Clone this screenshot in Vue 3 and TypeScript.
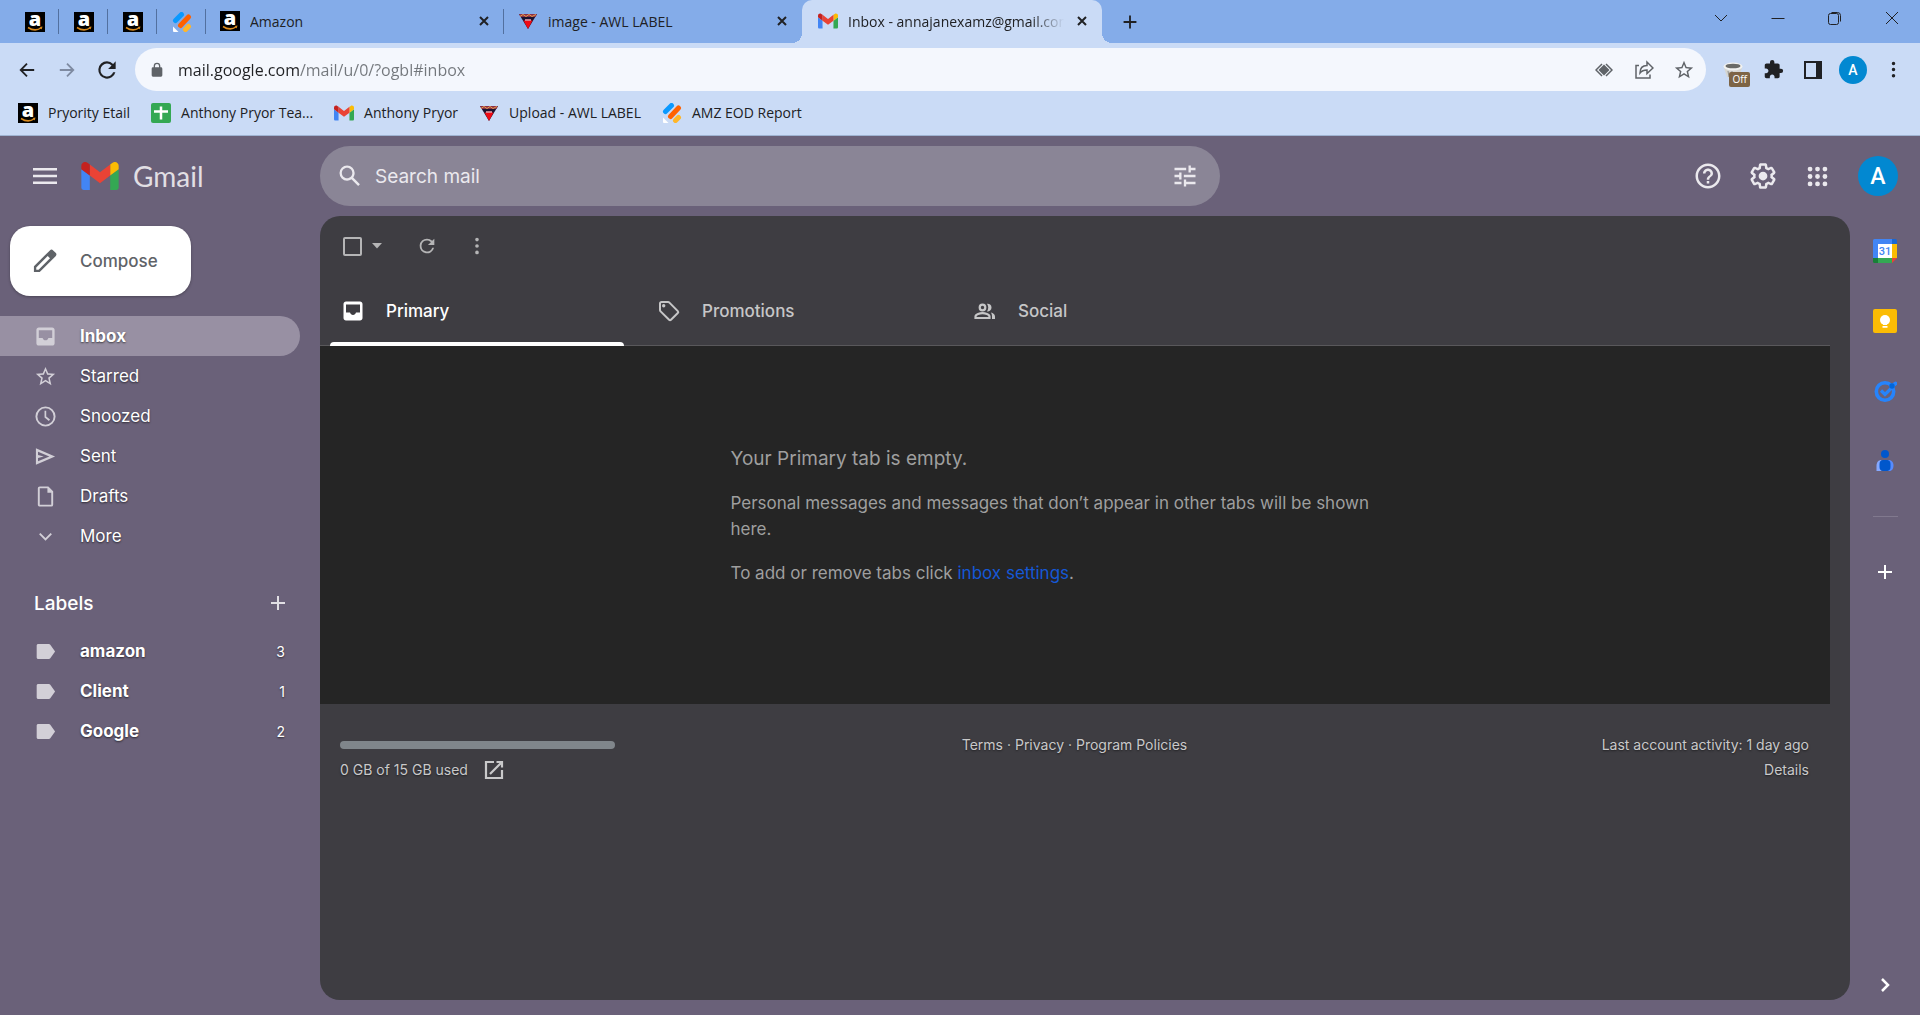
<script setup lang="ts">
import { ref } from 'vue'

interface NavItem { icon: string; name: string }
interface LabelItem { name: string; count: number }
interface Bookmark { icon: string; title: string }

const pinned: string[] = ['amazon', 'amazon', 'amazon', 'jot']
const openTabs: Bookmark[] = [
  { icon: 'amazon', title: 'Amazon' },
  { icon: 'awl', title: 'image - AWL LABEL' },
]
const bookmarks: Bookmark[] = [
  { icon: 'amazon', title: 'Pryority Etail' },
  { icon: 'sheet', title: 'Anthony Pryor Tea...' },
  { icon: 'gmail', title: 'Anthony Pryor' },
  { icon: 'awl', title: 'Upload - AWL LABEL' },
  { icon: 'jot', title: 'AMZ EOD Report' },
]
const nav: NavItem[] = [
  { icon: 'inbox', name: 'Inbox' },
  { icon: 'star', name: 'Starred' },
  { icon: 'clock', name: 'Snoozed' },
  { icon: 'send', name: 'Sent' },
  { icon: 'file', name: 'Drafts' },
  { icon: 'down', name: 'More' },
]
const labels: LabelItem[] = [
  { name: 'amazon', count: 3 },
  { name: 'Client', count: 1 },
  { name: 'Google', count: 2 },
]
const categories: NavItem[] = [
  { icon: 'inbox', name: 'Primary' },
  { icon: 'tag', name: 'Promotions' },
  { icon: 'people', name: 'Social' },
]
const apps: NavItem[] = [
  { icon: 'calendar', name: 'Calendar' },
  { icon: 'keep', name: 'Keep' },
  { icon: 'tasks', name: 'Tasks' },
  { icon: 'contacts', name: 'Contacts' },
]
const activeNav = ref('Inbox')
const activeCategory = ref('Primary')
const address = ref('mail.google.com/mail/u/0/?ogbl#inbox')
const query = ref('')
const allSelected = ref(false)
</script>

<template>
  <div class="window">
    <svg class="sprite" aria-hidden="true">
      <symbol id="amazon" viewBox="0 0 20 20">
        <rect width="20" height="20" fill="#000" />
        <text x="10" y="14" text-anchor="middle" font-family="Open Sans, sans-serif" font-weight="800" font-size="20" fill="#fff">a</text>
        <path d="M3 15.500q7 4.500 13 .5" fill="none" stroke="#d98a1e" stroke-width="1.500" />
        <path d="M14.500 15l3-.4-.8 2.800z" fill="#d98a1e" />
      </symbol>
      <symbol id="jot" viewBox="0 0 20 20">
        <g fill="none" stroke-width="5" stroke-linecap="round">
          <path d="M3.500 8.500l6-6" stroke="#0a99ff" />
          <path d="M8.500 13.500l8-8.500" stroke="#ff6100" />
          <path d="M13.500 17.500l3-3" stroke="#ffb629" />
        </g>
        <path d="M1 14.500l5.500 5.500H2a1 1 0 0 1-1-1z" fill="#fff" />
      </symbol>
      <symbol id="awl" viewBox="0 0 20 20">
        <path d="M1 3h18l-9 15z" fill="#1c1430" />
        <path d="M5.500 9.500h9L10 18z" fill="#f00a14" />
        <path d="M1 3h18l-1.500 3h-15z" fill="#8d3048" />
        <path d="M2 5.500l3-2 3 2 3-2 3 2 4-2" stroke="#e7a04a" fill="none" />
        <path d="M7 9h6" stroke="#f6a3ab" stroke-width="1.500" />
      </symbol>
      <symbol id="sheet" viewBox="0 0 20 20">
        <rect width="20" height="20" rx="2" fill="#34a853" />
        <path d="M10 3.500v13M3 8.500h14" stroke="#fff" stroke-width="2.500" />
      </symbol>
      <symbol id="gmail" viewBox="52 42 88 66">
        <path fill="#4285f4" d="M58 108h14V74L52 59v43c0 3.320 2.690 6 6 6" />
        <path fill="#34a853" d="M120 108h14c3.320 0 6-2.690 6-6V59l-20 15" />
        <path fill="#fbbc04" d="M120 48v26l20-15v-8c0-7.420-8.470-11.650-14.400-7.200" />
        <path fill="#ea4335" d="M72 74V48l24 18 24-18v26L96 92" />
        <path fill="#c5221f" d="M52 51v8l20 15V48l-5.600-4.200c-5.940-4.450-14.400-.22-14.400 7.200" />
      </symbol>
      <symbol id="close" viewBox="0 0 16 16"><path d="M4 4l8 8M12 4l-8 8" stroke="currentColor" stroke-width="2" /></symbol>
      <symbol id="plus" viewBox="0 0 24 24"><path d="M12 5v14M5 12h14" stroke="currentColor" stroke-width="2" /></symbol>
      <symbol id="back" viewBox="0 0 20 20"><path d="M18 10H3M10 3l-7 7 7 7" fill="none" stroke="currentColor" stroke-width="2" /></symbol>
      <symbol id="forward" viewBox="0 0 20 20"><path d="M2 10h15M10 3l7 7-7 7" fill="none" stroke="currentColor" stroke-width="2" /></symbol>
      <symbol id="lock" viewBox="0 0 24 24"><path fill="currentColor" d="M18 8h-1V6A5 5 0 0 0 7 6v2H6a2 2 0 0 0-2 2v10a2 2 0 0 0 2 2h12a2 2 0 0 0 2-2V10a2 2 0 0 0-2-2zM9 6a3 3 0 0 1 6 0v2H9z" /></symbol>
      <symbol id="lens" viewBox="0 0 18 14">
        <path d="M7 1L1 7l6 6M11 1l6 6-6 6" fill="none" stroke="currentColor" stroke-width="1.500" />
        <path d="M9 1.500L14.500 7 9 12.500 3.500 7z" fill="currentColor" />
      </symbol>
      <symbol id="share" viewBox="0 0 20 20"><path d="M5 5.500H2V18h14v-3.500M6 13c0-5 3-7.500 7-7.500V2l6 6-6 5.500V10c-3 0-5 .5-7 3z" fill="none" stroke="currentColor" stroke-width="1.500" /></symbol>
      <symbol id="puzzle" viewBox="0 0 24 24"><path fill="currentColor" d="M20.500 11H19V7c0-1.100-.9-2-2-2h-4V3.500a2.500 2.500 0 0 0-5 0V5H4c-1.100 0-2 .9-2 2v3.800h1.500c1.490 0 2.700 1.210 2.700 2.700s-1.210 2.700-2.700 2.700H2V20c0 1.100.9 2 2 2h3.800v-1.500c0-1.490 1.210-2.700 2.700-2.700s2.700 1.210 2.700 2.700V22H17c1.100 0 2-.9 2-2v-4h1.500a2.500 2.500 0 0 0 0-5z" /></symbol>
      <symbol id="panel" viewBox="0 0 18 18"><path fill="currentColor" fill-rule="evenodd" d="M0 0h18v18H0zM2 2v14h10V2z" /></symbol>
      <symbol id="bucket" viewBox="0 0 20 16">
        <path d="M1 6h18l-3 9c-3 1.500-9 1.500-12 0z" fill="#d6d6d2" />
        <path d="M5 9l1 6M9 9v7" stroke="#8f8f8c" />
        <ellipse cx="10" cy="4.500" rx="9.500" ry="4" fill="#f2f2f0" />
        <ellipse cx="10" cy="4" rx="7.500" ry="2.300" fill="#6b6b68" />
      </symbol>
      <symbol id="chev" viewBox="0 0 14 14"><path d="M1 4l6 6 6-6" fill="none" stroke="currentColor" /></symbol>
      <symbol id="min" viewBox="0 0 14 14"><path d="M.5 7.500h13" stroke="currentColor" /></symbol>
      <symbol id="restore" viewBox="0 0 14 14"><path d="M3.500 1.500h6a3 3 0 0 1 3 3v6" fill="none" stroke="currentColor" /><rect x=".5" y="2.500" width="10" height="11" rx="2" fill="none" stroke="currentColor" /></symbol>
      <symbol id="exit" viewBox="0 0 14 14"><path d="M1 1l12 12M13 1L1 13" stroke="currentColor" /></symbol>
      <symbol id="menu" viewBox="0 0 24 24"><path fill="currentColor" d="M0 20h24v-2.500H0zm0-6.800h24v-2.400H0zM0 4v2.500h24V4z" /></symbol>
      <symbol id="search" viewBox="0 0 24 24"><path fill="currentColor" d="M20.490 19l-5.730-5.730C15.530 12.200 16 10.910 16 9.500A6.500 6.500 0 1 0 9.500 16c1.410 0 2.700-.47 3.770-1.240L19 20.490 20.490 19zM5 9.500C5 7.010 7.010 5 9.500 5S14 7.010 14 9.500 11.990 14 9.500 14 5 11.990 5 9.500z" /></symbol>
      <symbol id="tune" viewBox="0 0 24 24"><path fill="currentColor" d="M3 17v2h6v-2H3zM3 5v2h10V5H3zm10 16v-2h8v-2h-8v-2h-2v6h2zM7 9v2H3v2h4v2h2V9H7zm14 4v-2H11v2h10zm-6-4h2V7h4V5h-4V3h-2v6z" /></symbol>
      <symbol id="help" viewBox="0 0 24 24"><path fill="currentColor" d="M11 18h2v-2h-2v2zm1-16C6.480 2 2 6.480 2 12s4.480 10 10 10 10-4.480 10-10S17.520 2 12 2zm0 18c-4.410 0-8-3.590-8-8s3.590-8 8-8 8 3.590 8 8-3.590 8-8 8zm0-14c-2.210 0-4 1.790-4 4h2c0-1.100.9-2 2-2s2 .9 2 2c0 2-3 1.750-3 5h2c0-2.250 3-2.500 3-5 0-2.210-1.790-4-4-4z" /></symbol>
      <symbol id="gear" viewBox="0 0 24 24">
        <path fill="currentColor" d="M13.850 22.250h-3.700c-.74 0-1.360-.54-1.450-1.270l-.27-1.890c-.27-.14-.53-.29-.79-.46l-1.800.72c-.7.26-1.470-.03-1.810-.65L2.200 15.530c-.35-.66-.2-1.440.36-1.880l1.530-1.190c-.01-.15-.02-.3-.02-.46 0-.15.01-.31.02-.46l-1.520-1.190c-.59-.45-.74-1.260-.37-1.880l1.850-3.190c.34-.62 1.110-.9 1.790-.63l1.810.73c.26-.17.52-.32.78-.46l.27-1.910c.09-.7.71-1.250 1.440-1.250h3.700c.74 0 1.360.54 1.450 1.270l.27 1.890c.27.14.53.29.79.46l1.800-.72c.71-.26 1.480.03 1.820.65l1.840 3.180c.36.66.2 1.440-.36 1.880l-1.520 1.190c.01.15.02.3.02.46s-.01.31-.02.46l1.520 1.190c.56.45.72 1.230.37 1.860l-1.860 3.220c-.34.62-1.110.9-1.800.63l-1.800-.72c-.26.17-.52.32-.78.46l-.27 1.910c-.1.68-.72 1.220-1.460 1.220zm-3.230-2h2.760l.37-2.550.53-.22c.44-.18.88-.44 1.340-.78l.45-.34 2.380.96 1.380-2.400-2.030-1.580.07-.56c.03-.26.06-.51.06-.78s-.03-.53-.06-.78l-.07-.56 2.030-1.580-1.390-2.400-2.390.96-.45-.35c-.42-.32-.87-.58-1.330-.77l-.52-.22-.37-2.550h-2.760l-.37 2.550-.53.21c-.44.19-.88.44-1.340.79l-.45.33-2.380-.95-1.390 2.390 2.030 1.580-.07.56a7 7 0 0 0-.06.79c0 .26.02.53.06.78l.07.56-2.030 1.580 1.380 2.400 2.390-.96.45.35c.43.33.86.58 1.330.77l.53.22.38 2.550z" />
        <circle cx="12" cy="12" r="3.500" fill="currentColor" />
      </symbol>
      <symbol id="grid" viewBox="0 0 24 24"><path fill="none" stroke="currentColor" stroke-width="5.500" stroke-linecap="round" d="M3.500 3.500h0M12 3.500h0M20.500 3.500h0M3.500 12h0M12 12h0M20.500 12h0M3.500 20.500h0M12 20.500h0M20.500 20.500h0" /></symbol>
      <symbol id="pencil" viewBox="0 0 24 24"><path fill="currentColor" fill-rule="evenodd" d="M21.100 5l-2.100-2.100a2 2 0 0 0-2.830 0L2.500 16.500v5h5L21.100 7.830a2 2 0 0 0 0-2.830zM6.500 19.500h-2v-2L14.300 7.700l2 2z" /></symbol>
      <symbol id="inbox" viewBox="0 0 24 24"><path fill="currentColor" d="M19 2.500H5c-1.400 0-2.500 1.100-2.500 2.500v14c0 1.400 1.100 2.500 2.500 2.500h14c1.400 0 2.500-1.100 2.500-2.500V5c0-1.400-1.100-2.500-2.500-2.500zm0 11h-4c-.5 1.500-1.500 2.500-3 2.500s-2.500-1-3-2.500H5V5.500h14v8z" /></symbol>
      <symbol id="star" viewBox="0 0 24 24"><path fill="currentColor" d="M22 9.240l-7.190-.62L12 2 9.190 8.630 2 9.240l5.460 4.730L5.820 21 12 17.270 18.180 21l-1.630-7.030L22 9.240zM12 15.400l-3.760 2.270 1-4.280-3.320-2.880 4.380-.38L12 6.100l1.710 4.040 4.380.38-3.320 2.880 1 4.280L12 15.400z" /></symbol>
      <symbol id="clock" viewBox="0 0 24 24"><path fill="currentColor" d="M12 1.500a10.500 10.500 0 1 0 0 21 10.500 10.500 0 0 0 0-21zm0 19a8.500 8.500 0 1 1 0-17 8.500 8.500 0 0 1 0 17zM12.750 6H11v7l4.500 3.600 1.200-1.400-3.950-3.200z" /></symbol>
      <symbol id="send" viewBox="0 0 24 24"><path fill="currentColor" fill-rule="evenodd" d="M2 3.500v17l20-8.500zm2.200 3.500L16 12 4.200 17v-3.500l6-1.500-6-1.500z" /></symbol>
      <symbol id="file" viewBox="0 0 24 24"><path fill="currentColor" fill-rule="evenodd" d="M15 1.500H6a2 2 0 0 0-2 2v17c0 1.100.9 2 2 2h12a2 2 0 0 0 2-2V6.500zm3 19H6v-17h8v4.500h4z" /></symbol>
      <symbol id="down" viewBox="0 0 24 24"><path d="M6 9l6 6 6-6" fill="none" stroke="currentColor" stroke-width="2" /></symbol>
      <symbol id="right" viewBox="0 0 24 24"><path d="M9 6l6 6-6 6" fill="none" stroke="currentColor" stroke-width="2.500" /></symbol>
      <symbol id="label" viewBox="0 0 24 24"><path fill="currentColor" d="M17 5c-.3-.5-.9-.8-1.500-.8H4.500c-1 0-1.700.7-1.700 1.600v12.400c0 .9.700 1.600 1.700 1.600h11c.6 0 1.200-.3 1.500-.8l5-7z" /></symbol>
      <symbol id="caret" viewBox="0 0 10 6"><path fill="currentColor" d="M0 0h10L5 5.500z" /></symbol>
      <symbol id="refresh" viewBox="0 0 24 24"><path fill="currentColor" d="M17.650 6.350A7.960 7.960 0 0 0 12 4a8 8 0 1 0 7.730 10h-2.080A6 6 0 1 1 12 6c1.660 0 3.140.69 4.220 1.780L13 11h7V4l-2.350 2.350z" /></symbol>
      <symbol id="dots" viewBox="0 0 24 24"><path fill="none" stroke="currentColor" stroke-width="4" stroke-linecap="round" d="M12 5h0M12 12h0M12 19h0" /></symbol>
      <symbol id="tag" viewBox="0 0 24 24">
        <path d="M3 4.500V11c0 .5.200 1 .6 1.400l8.500 8.400c.6.600 1.300.6 1.900 0l6.800-6.800c.6-.6.6-1.300 0-1.900l-8.400-8.500A2 2 0 0 0 11 3H4.500A1.500 1.500 0 0 0 3 4.500z" fill="none" stroke="currentColor" stroke-width="2" />
        <circle cx="6.700" cy="6.700" r="1.700" fill="currentColor" />
      </symbol>
      <symbol id="people" viewBox="0 0 24 24">
        <circle cx="9.500" cy="8.500" r="2.800" fill="none" stroke="currentColor" stroke-width="2.200" />
        <path d="M2.500 19v-1.500c0-2.300 4.500-3.300 7-3.300s7 1 7 3.300V19z" fill="none" stroke="currentColor" stroke-width="2.200" />
        <path d="M14 4.700a3.900 3.900 0 1 1 0 7.700q2.500-3.900 0-7.700zM17.800 13.500c2.500.5 4.200 2 4.200 4v2.600h-3v-2.600c0-1.700-.4-2.900-1.200-4z" fill="currentColor" />
      </symbol>
      <symbol id="open" viewBox="0 0 24 24"><path d="M12 4H4v16h16v-8M14.500 4H20v5.500M20 4L8 16" fill="none" stroke="currentColor" stroke-width="2.200" /></symbol>
      <symbol id="calendar" viewBox="0 0 24 24">
        <path d="M5 0H19v5H5v14H0V1.500A1.500 1.500 0 0 1 1.500 0z" fill="#4285f4" />
        <path d="M19 0h3.500A1.500 1.500 0 0 1 24 1.500V5h-5z" fill="#1967d2" />
        <path d="M19 5h5v14h-5z" fill="#fbbc04" />
        <path d="M0 19h5v5H1.500A1.500 1.500 0 0 1 0 22.500z" fill="#188038" />
        <path d="M5 19h14v5H5z" fill="#34a853" />
        <path d="M19 19h5l-5 5z" fill="#ea4335" />
        <path d="M5 5h14v14H5z" fill="#fff" />
        <text x="12" y="16" text-anchor="middle" font-family="Roboto, sans-serif" font-weight="500" font-size="11" fill="#4285f4">31</text>
      </symbol>
      <symbol id="keep" viewBox="0 0 24 24">
        <rect width="24" height="24" rx="2" fill="#fbbc04" />
        <circle cx="12" cy="11" r="5" fill="#fff" />
        <path d="M10 14h4v2h-4zM9.500 17h5v1.800h-5z" fill="#fff" />
      </symbol>
      <symbol id="tasks" viewBox="0 0 24 24">
        <circle cx="12" cy="12.500" r="8.700" fill="none" stroke="#2684fc" stroke-width="3.600" />
        <path d="M8 11.500l4 4 6.500-6.500" fill="none" stroke="#2684fc" stroke-width="3.200" />
        <path d="M18.500 7.500l4-3" stroke="#2684fc" stroke-width="4" stroke-linecap="round" />
        <circle cx="19" cy="7" r="2.700" fill="#0066da" />
      </symbol>
      <symbol id="contacts" viewBox="0 0 24 24">
        <path d="M3.500 22v-5c0-4 2-6 5-6v11z" fill="#86a9ff" />
        <path d="M15 11c3.500 0 5.500 2 5.500 5.500 0 3-1.500 5.500-4 5.500H15z" fill="#578cff" />
        <rect x="6.500" y="11" width="11" height="11" rx="4" fill="#0057cc" />
        <circle cx="12" cy="5" r="4" fill="#0057cc" />
      </symbol>
    </svg>

    <div class="tabstrip">
      <div class="pins">
        <button v-for="(p, i) in pinned" :key="i" class="pin" type="button" aria-label="Pinned tab">
          <svg class="fav"><use :href="'#' + p" /></svg>
        </button>
      </div>
      <div v-for="t in openTabs" :key="t.title" class="tab">
        <svg class="fav"><use :href="'#' + t.icon" /></svg>
        <span class="tab-title">{{ t.title }}</span>
        <button type="button" class="tab-close" aria-label="Close tab"><svg><use href="#close" /></svg></button>
      </div>
      <div class="tab current">
        <svg class="fav"><use href="#gmail" /></svg>
        <span class="tab-title faded">Inbox - annajanexamz@gmail.com</span>
        <button type="button" class="tab-close" aria-label="Close tab"><svg><use href="#close" /></svg></button>
      </div>
      <button type="button" class="new-tab" aria-label="New tab"><svg><use href="#plus" /></svg></button>
      <div class="controls">
        <button v-for="c in ['chev', 'min', 'restore', 'exit']" :key="c" type="button" :aria-label="c"><svg><use :href="'#' + c" /></svg></button>
      </div>
    </div>

    <div class="toolbar">
      <button type="button" class="navbtn" aria-label="Back"><svg><use href="#back" /></svg></button>
      <button type="button" class="navbtn dim" aria-label="Forward"><svg><use href="#forward" /></svg></button>
      <button type="button" class="navbtn big" aria-label="Reload"><svg><use href="#refresh" /></svg></button>
      <div class="omnibox">
        <svg class="lock"><use href="#lock" /></svg>
        <input v-model="address" class="url" type="text" aria-label="Address">
        <button v-for="c in ['lens', 'share', 'star']" :key="c" type="button" :class="c" :aria-label="c"><svg><use :href="'#' + c" /></svg></button>
      </div>
      <div class="extensions">
        <button type="button" class="bucket" aria-label="Extension"><svg><use href="#bucket" /></svg><span class="off">Off</span></button>
        <button type="button" aria-label="Extensions"><svg class="puzzle"><use href="#puzzle" /></svg></button>
        <button type="button" aria-label="Side panel"><svg class="side"><use href="#panel" /></svg></button>
        <button type="button" class="avatar small">A</button>
        <button type="button" aria-label="Browser menu"><svg class="puzzle"><use href="#dots" /></svg></button>
      </div>
    </div>

    <nav class="bookmarks">
      <a v-for="b in bookmarks" :key="b.title" href="#">
        <svg class="fav"><use :href="'#' + b.icon" /></svg><span>{{ b.title }}</span>
      </a>
    </nav>

    <div class="mail">
      <header>
        <div class="brand">
          <button type="button" aria-label="Main menu"><svg class="menu"><use href="#menu" /></svg></button>
          <svg class="logo"><use href="#gmail" /></svg>
          <span class="brand-name">Gmail</span>
        </div>
        <form class="search" @submit.prevent>
          <button type="submit" aria-label="Search"><svg><use href="#search" /></svg></button>
          <input v-model="query" type="text" placeholder="Search mail" aria-label="Search mail">
          <button type="button" aria-label="Search options"><svg><use href="#tune" /></svg></button>
        </form>
        <div class="account">
          <button type="button" aria-label="Support"><svg><use href="#help" /></svg></button>
          <button type="button" aria-label="Settings"><svg><use href="#gear" /></svg></button>
          <button type="button" aria-label="Google apps"><svg class="apps"><use href="#grid" /></svg></button>
          <button type="button" class="avatar">A</button>
        </div>
      </header>

      <div class="body">
        <aside class="sidebar">
          <button type="button" class="compose"><svg><use href="#pencil" /></svg>Compose</button>
          <a
            v-for="n in nav" :key="n.name" href="#" class="row" :class="{ active: n.name === activeNav }"
            @click.prevent="activeNav = n.name"
          ><svg><use :href="'#' + n.icon" /></svg><span>{{ n.name }}</span></a>
          <div class="labels-head">
            <h2>Labels</h2>
            <button type="button" aria-label="Create new label"><svg><use href="#plus" /></svg></button>
          </div>
          <a v-for="l in labels" :key="l.name" href="#" class="row unread"><svg><use href="#label" /></svg><span>{{ l.name }}</span><span class="count">{{ l.count }}</span></a>
        </aside>

        <main>
          <div class="actions">
            <input v-model="allSelected" type="checkbox" aria-label="Select">
            <button type="button" class="arrow" aria-label="Select options"><svg><use href="#caret" /></svg></button>
            <button type="button" aria-label="Refresh"><svg><use href="#refresh" /></svg></button>
            <button type="button" aria-label="More"><svg><use href="#dots" /></svg></button>
          </div>
          <div class="categories" role="tablist">
            <button
              v-for="c in categories" :key="c.name" type="button" role="tab" :class="{ on: c.name === activeCategory }"
              :aria-selected="c.name === activeCategory" @click="activeCategory = c.name"
            ><svg><use :href="'#' + c.icon" /></svg>{{ c.name }}</button>
          </div>
          <section class="empty">
            <div class="message">
              <h3>Your Primary tab is empty.</h3>
              <p>Personal messages and messages that don’t appear in other tabs will be shown here.</p>
              <p>To add or remove tabs click <a href="#">inbox settings</a>.</p>
            </div>
          </section>
          <footer>
            <div class="storage">
              <div class="bar"></div>
              <div class="used">0 GB of 15 GB used <a href="#" aria-label="Manage storage"><svg><use href="#open" /></svg></a></div>
            </div>
            <div class="policies"><a href="#">Terms</a> · <a href="#">Privacy</a> · <a href="#">Program Policies</a></div>
            <div class="activity">Last account activity: 1 day ago<br><a href="#">Details</a></div>
          </footer>
        </main>

        <aside class="addons">
          <button v-for="a in apps" :key="a.name" type="button" :aria-label="a.name"><svg><use :href="'#' + a.icon" /></svg></button>
          <hr>
          <button type="button" aria-label="Get add-ons"><svg><use href="#plus" /></svg></button>
          <button type="button" class="collapse" aria-label="Hide side panel"><svg><use href="#right" /></svg></button>
        </aside>
      </div>
    </div>
  </div>
</template>

<style>
body { margin: 0; background: #6a6179; }
</style>

<style scoped>
* { box-sizing: border-box; }
svg { display: block; flex: none; width: 24px; height: 24px; }
button { display: flex; align-items: center; justify-content: center; padding: 0; border: 0; background: none; color: inherit; font: inherit; cursor: pointer; }
a { color: inherit; text-decoration: none; }
.sprite { display: none; }
.window { display: flex; flex-direction: column; min-height: 100vh; font-family: "Open Sans", "Noto Sans", sans-serif; font-size: 14px; color: #202124; background: #6a6179; }
.fav { width: 20px; height: 20px; }

.tabstrip { display: flex; height: 43px; background: #84ace9; }
.pins { display: flex; padding-left: 10px; }
.pin { width: 49px; position: relative; }
.pin::after, .tab:not(.current)::after { content: ""; position: absolute; right: 0; top: 9px; width: 1px; height: 25px; background: #52709f; }
.tab { position: relative; display: flex; align-items: center; width: 298px; padding: 0 12px 1px 14px; gap: 10px; }
.tab:nth-last-of-type(3)::after { display: none; }
.tab-title { flex: 1; overflow: hidden; white-space: nowrap; }
.faded { mask-image: linear-gradient(to right, #000 85%, transparent); }
.tab-close svg { width: 16px; height: 16px; }
.current { width: 300px; padding-left: 16px; background: #cadbf6; border-radius: 10px 10px 0 0; }
.current::before, .current::after { content: ""; position: absolute; bottom: 0; width: 10px; height: 10px; }
.current::before { right: 100%; background: radial-gradient(circle at 0 0, transparent 10px, #cadbf6 10px); }
.current::after { left: 100%; background: radial-gradient(circle at 100% 0, transparent 10px, #cadbf6 10px); }
.new-tab { width: 56px; }
.new-tab svg { width: 22px; height: 22px; }
.controls { display: flex; margin-left: auto; height: 36px; }
.controls button { width: 57px; }
.controls svg { width: 14px; height: 14px; }

.toolbar { display: flex; align-items: center; height: 53px; padding-left: 7px; background: #cadbf6; }
.navbtn { width: 40px; }
.navbtn svg { width: 18px; height: 18px; }
.navbtn.big svg { width: 26px; height: 26px; }
.dim { color: #7e8aa1; }
.omnibox { display: flex; flex: 1; align-items: center; height: 43px; margin-left: 8px; padding: 0 2px 0 14px; border-radius: 22px; background: #f4f7fd; color: #5f6368; }
.lock { width: 16px; height: 16px; margin-right: 13px; }
.url { flex: 1; min-width: 0; padding: 0; border: 0; outline: 0; font: inherit; font-size: 16px; background: linear-gradient(to right, #202124 122px, #73777c 122px); background-clip: text; -webkit-text-fill-color: transparent; }
.omnibox button { width: 40px; }
.omnibox .lens svg { width: 18px; height: 14px; }
.omnibox .share svg { width: 20px; height: 20px; }
.omnibox .star svg { width: 22px; height: 22px; }
.extensions { display: flex; align-items: center; padding: 0 7px; }
.extensions button { width: 40px; height: 40px; }
.extensions .bucket { position: relative; }
.bucket svg { width: 20px; height: 16px; }
.off { position: absolute; right: 3px; bottom: 3px; padding: 0 3px; border-radius: 2px; background: #7d6445; color: #fff; font-size: 10px; line-height: 15px; }
.puzzle { width: 21px; height: 21px; }
.side { width: 18px; height: 18px; }
.avatar { border-radius: 50%; background: #0288d1; color: #fff; font-family: Roboto, sans-serif; font-weight: 500; }
.extensions .avatar.small { width: 28px; height: 28px; margin: 0 6px; font-size: 14px; }

.bookmarks { display: flex; align-items: flex-start; gap: 21px; height: 40px; padding: 7px 18px; background: #cadbf6; border-bottom: 1px solid #9fb3d1; }
.bookmarks a { display: flex; align-items: center; gap: 10px; line-height: 20px; white-space: nowrap; }

.mail { display: flex; flex: 1; flex-direction: column; color: #fff; font-family: Inter, Roboto, sans-serif; font-size: 17px; }
header { display: flex; align-items: center; height: 80px; padding-right: 22px; color: #ebe9ee; }
.brand { display: flex; align-items: center; width: 320px; padding-left: 33px; }
.logo { width: 38px; height: 28px; margin: 0 14px 0 24px; }
.brand-name { font-family: Lato, sans-serif; font-size: 28px; color: #e1dfe4; }
.search { display: flex; flex: 0 1 900px; align-items: center; height: 60px; padding: 0 21px 0 16px; border-radius: 30px; background: #8a8596; }
.search svg { width: 28px; height: 28px; }
.search input { flex: 1; min-width: 0; margin-left: 11px; padding: 0; border: 0; outline: 0; background: none; color: #ebe9ee; font: inherit; font-size: 19px; }
.search input::placeholder { color: #ebe9ee; opacity: 1; }
.account { display: flex; margin-left: auto; align-items: center; }
.account button { width: 55px; }
.account svg { width: 30px; height: 30px; }
.account .apps { width: 21px; height: 21px; }
.account .avatar { width: 40px; height: 40px; margin-left: 13px; font-size: 23px; }

.body { display: flex; flex: 1; }
.sidebar { width: 320px; padding-top: 10px; }
.compose { justify-content: flex-start; width: 181px; height: 70px; margin: 0 0 20px 10px; padding-left: 21px; gap: 21px; border-radius: 20px; background: #fff; color: #5f6368; font-weight: 500; box-shadow: 0 1px 3px rgba(0, 0, 0, .3); }
.compose svg { width: 28px; height: 28px; }
.row { display: flex; align-items: center; width: 300px; height: 40px; padding: 0 15px 0 34px; border-radius: 0 20px 20px 0; text-shadow: 0 1px 2px rgba(0, 0, 0, .6); }
.row svg { width: 23px; height: 23px; margin-right: 23px; color: #d2cfd7; }
.row.active { background: #9890a3; }
.active, .unread { font-weight: 700; }
.count { margin-left: auto; font-size: 14px; font-weight: 400; }
.labels-head { display: flex; align-items: center; justify-content: space-between; height: 40px; margin: 27px 30px 8px 34px; }
h2 { margin: 0; font-size: 19px; font-weight: 500; }
.labels-head button { color: #e1dfe4; }

main { display: flex; flex: 1; flex-direction: column; min-width: 0; margin-bottom: 15px; border-radius: 20px; background: #3e3d42; }
.actions { display: flex; align-items: center; height: 60px; padding-left: 23px; color: #b5b5b6; }
.actions input { appearance: none; width: 19px; height: 19px; margin: 0; border: 2px solid #b5b5b6; border-radius: 2px; }
.actions button { width: 50px; }
.actions .arrow { width: 30px; margin-right: 10px; }
.actions svg { width: 22px; height: 22px; }
.actions .arrow svg { width: 10px; height: 6px; }
.categories { display: flex; height: 70px; margin-right: 20px; border-bottom: 1px solid #59585b; }
.categories button { position: relative; width: 316px; height: 70px; padding-left: 21px; gap: 21px; justify-content: flex-start; color: #c6c6c7; font-weight: 500; }
.categories svg { width: 24px; height: 24px; }
.categories .on { color: #fff; }
.categories .on::after { content: ""; position: absolute; left: 10px; right: 12px; bottom: 0; height: 4px; border-radius: 4px 4px 0 0; background: #fff; }
.empty { display: flex; justify-content: center; height: 358px; margin-right: 20px; padding-top: 100px; background: #252525; color: #9f9f9f; line-height: 26px; }
.message { width: 689px; padding-right: 20px; }
h3 { margin: 0 0 18px; font-size: 19px; font-weight: 400; }
p { margin: 0 0 18px; }
p a { color: #1558d6; }
footer { display: grid; grid-template-columns: 1fr 1fr 1fr; padding: 28px 41px 0 20px; color: #c9c9ca; font-size: 14px; line-height: 25px; text-shadow: 0 1px 2px rgba(0, 0, 0, .5); }
.bar { width: 275px; height: 8px; margin: 9px 0 8px; border-radius: 4px; background: #80868b; }
.used { display: flex; align-items: center; gap: 14px; }
.used svg { width: 24px; height: 24px; }
.policies { text-align: center; }
.activity { text-align: right; }
.addons { display: flex; flex-direction: column; align-items: center; width: 70px; }
.addons button { width: 40px; height: 70px; }
hr { width: 25px; height: 1px; margin: 20px 0; border: 0; background: #81798e; }
.addons .collapse { margin: auto 0 0; height: 60px; }
</style>
